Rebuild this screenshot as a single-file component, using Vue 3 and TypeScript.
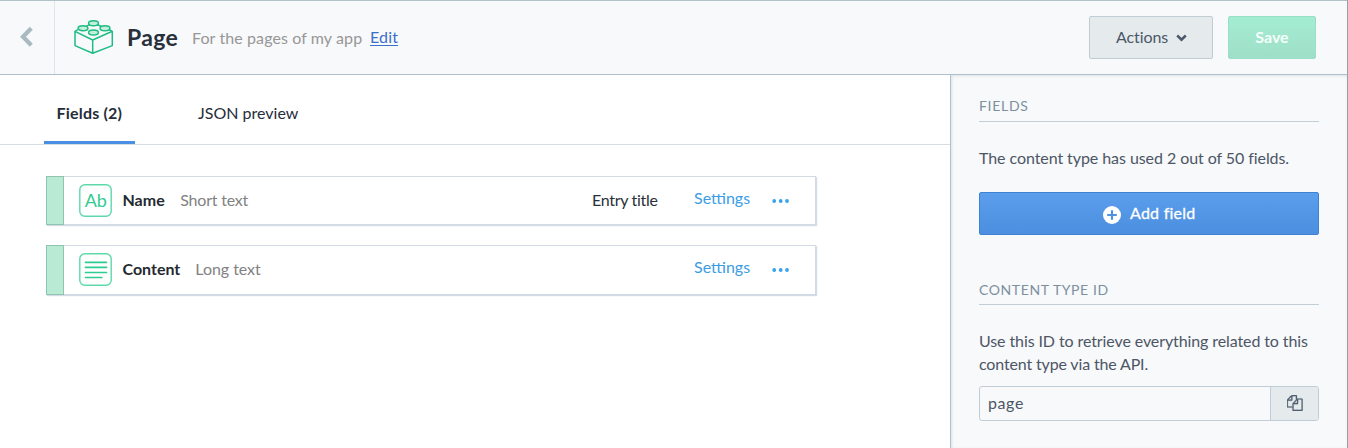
<script setup lang="ts">
interface Field {
  name: string
  type: string
  kind: 'short' | 'long'
  title: boolean
}

const fields: Field[] = [
  { name: 'Name', type: 'Short text', kind: 'short', title: true },
  { name: 'Content', type: 'Long text', kind: 'long', title: false },
]
</script>

<template>
  <div class="page">
    <header class="header">
      <a class="back" aria-label="Back">
        <svg width="14" height="22" viewBox="0 0 14 22"><path d="M12.300 2.200 4 10.800l8.300 8.400" fill="none" stroke="#a9b9c0" stroke-width="4.200" /></svg>
      </a>
      <svg class="brick" width="42" height="38" viewBox="0 0 42 38" fill="none" stroke="#1fbd84" stroke-width="1.500" stroke-linejoin="round">
        <path d="M5 11.700 2 13.300V27.600l17.700 7.700 19.600-7.700V13.300l-3-1.600M2 13.300l17.700 8.700 19.600-8.700M19.700 22v13.300M13.500 8.200l3-1.500M24.500 6.700l4 1.800" />
        <g fill="#c3efdb">
          <ellipse cx="20.500" cy="5.200" rx="4.900" ry="2.500" />
          <ellipse cx="10" cy="10.200" rx="4.900" ry="2.500" />
          <ellipse cx="32" cy="10.200" rx="4.900" ry="2.500" />
          <ellipse cx="20.500" cy="14.400" rx="4.900" ry="2.500" />
        </g>
      </svg>
      <h1>Page</h1>
      <span class="desc">For the pages of my app</span>
      <a class="edit">Edit</a>
      <div class="buttons">
        <button class="btn actions">
          <span>Actions</span>
          <svg width="11" height="8" viewBox="0 0 11 8"><path d="M1.200 1.500 5.500 5.700l4.300-4.200" fill="none" stroke="#4b5a6b" stroke-width="2.500" /></svg>
        </button>
        <button class="btn save"><span>Save</span></button>
      </div>
    </header>

    <div class="body">
      <main class="main">
        <nav class="tabs">
          <a class="tab active"><span>Fields (2)</span></a>
          <a class="tab json">JSON preview</a>
        </nav>
        <ul class="fields">
          <li v-for="f in fields" :key="f.name" class="field" :class="f.kind">
            <span class="handle"></span>
            <svg class="icon" width="33" height="33" viewBox="0 0 33 33">
              <rect x="0.800" y="0.800" width="31.400" height="31.400" rx="5" fill="none" stroke="#5ed9ab" stroke-width="1.400" />
              <text v-if="f.kind === 'short'" x="5.800" y="23" textLength="22" class="ab">Ab</text>
              <path v-else d="M6.500 9.300h21M6.500 14.400h21M6.500 19.500h21M6.500 24.500h16.300" stroke="#2fcb93" stroke-width="1.700" stroke-linecap="round" />
            </svg>
            <strong class="name">{{ f.name }}</strong>
            <span class="type">{{ f.type }}</span>
            <span class="spacer"></span>
            <span v-if="f.title" class="entry">Entry title</span>
            <a class="settings">Settings</a>
            <svg class="dots" width="18" height="4" viewBox="0 0 18 4" fill="#36a3ea">
              <circle cx="2.200" cy="2" r="1.900" /><circle cx="8.700" cy="2" r="1.900" /><circle cx="15" cy="2" r="1.900" />
            </svg>
          </li>
        </ul>
      </main>

      <aside class="side">
        <h2 class="h-fields">FIELDS</h2>
        <p class="usage">The content type has used 2 out of 50 fields.</p>
        <button class="add">
          <svg width="18" height="18" viewBox="0 0 18 18"><circle cx="9" cy="9" r="9" fill="#fff" /><path d="M9 4.200v9.600M4.200 9h9.600" stroke="#4f90e0" stroke-width="2.200" /></svg>
          <span>Add field</span>
        </button>
        <h2 class="h-id">CONTENT TYPE ID</h2>
        <p class="help"><span class="l1">Use this ID to retrieve everything related to this</span><br /><span class="l2">content type via the API.</span></p>
        <div class="copy">
          <span class="value">page</span>
          <button class="copy-btn" aria-label="Copy">
            <svg width="16" height="16" viewBox="0 0 1792 1792" fill="#536171" stroke="#536171" stroke-width="25"><path d="M1664 384q40 0 68 28t28 68v1216q0 40-28 68t-68 28h-960q-40 0-68-28t-28-68v-288h-544q-40 0-68-28t-28-68v-672q0-40 20-88t48-76l408-408q28-28 76-48t88-20h416q40 0 68 28t28 68v328q68-40 128-40h416zm-544 213l-299 299h299v-299zm-640-384l-299 299h299v-299zm196 647l316-316v-416h-384v416q0 40-28 68t-68 28h-416v640h512v-256q0-40 20-88t48-76zm956 804v-1152h-384v416q0 40-28 68t-68 28h-416v640h896z" /></svg>
          </button>
        </div>
      </aside>
    </div>
  </div>
</template>

<style>
body { margin: 0; background: #fff; overflow: hidden; }
</style>

<style scoped>
* { box-sizing: border-box; }
.page {
  width: 1348px;
  height: 448px;
  display: flex;
  flex-direction: column;
  border-right: 1px solid #999fa3;
  background: #fff;
  font: 16px/22px Lato, "Liberation Sans", sans-serif;
  color: #2a3039;
  white-space: nowrap;
}
button { font: inherit; padding: 0; }
.header {
  height: 75px;
  flex: none;
  display: flex;
  background: #f7f9fb;
  border-top: 1px solid #b3c1cb;
  border-bottom: 1px solid #b0bfc9;
}
.back { width: 55px; padding: 25px 0 0 19px; border-right: 1px solid #e0e5e9; }
.brick { margin: 17px 0 0 18px; width: 42px; height: 38px; }
h1 { width: 52px; margin: 21px 0 0 12px; font-size: 23px; line-height: 30px; font-weight: 700; color: #28303b; letter-spacing: 0.3px; }
.desc { width: 170px; margin: 26px 0 0 13px; color: #979797; letter-spacing: 0.1px; }
.edit { margin: 25px 0 0 8px; color: #3c6fc9; text-decoration: underline; text-underline-offset: 2px; letter-spacing: 0.15px; }
.buttons { margin: 15px 31px 0 auto; display: flex; gap: 15px; }
.btn { height: 43px; border-radius: 2px; }
.actions {
  width: 124px;
  display: flex;
  align-items: center;
  gap: 8px;
  padding-left: 26px;
  border: 1px solid #c1cdd4;
  background: #e5ebed;
  color: #4b5766;
}
.actions span { margin-top: -2px; letter-spacing: -0.1px; }
.save { width: 88px; padding-bottom: 2px; border: 1px solid #9adfc7; background: linear-gradient(#a3edd2, #9fdec8); color: #f5fffb; font-weight: 700; }
.body { flex: 1; display: flex; min-height: 0; }
.main { width: 950px; }
.tabs { height: 70px; display: flex; padding-left: 44px; border-bottom: 1px solid #d5dde3; }
.tab { padding-top: 27px; color: #252d3a; }
.active { width: 91px; padding-left: 12.5px; border-bottom: 3px solid #4a90e2; font-weight: 700; letter-spacing: 0.2px; }
.json { margin-left: 63px; }
.fields { list-style: none; margin: 31px 0 0 46px; padding: 0; width: 770px; }
.field {
  height: 49px;
  display: flex;
  margin-bottom: 20px;
  border: 1px solid #d3dae3;
  box-shadow: 1px 1px 1px #d3dbe6;
  background: #fff;
}
.field.long { height: 50px; }
.handle { width: 18px; margin: -1px 0 -1px -1px; background: #b9ead4; border: 1px solid #8fc5ae; }
.icon { margin: 7px 0 0 15px; }
.ab { font-size: 18px; fill: #2fcb93; }
.name { margin: 12px 0 0 10.500px; color: #242a30; }
.type { margin: 12px 0 0 15.500px; color: #828282; letter-spacing: -0.2px; }
.long .type { margin-left: 15px; letter-spacing: -0.05px; }
.spacer { flex: 1; }
.entry { width: 67px; margin: 12px 35px 0 0; letter-spacing: -0.3px; }
.settings { width: 57px; margin: 10px 21px 0 0; color: #3c9de5; }
.dots { margin: 22px 25px 0 0; }
.side {
  flex: 1;
  padding: 19px 28px 0;
  background: #f7f9fb;
  border-left: 1px solid #b0bfc9;
  box-shadow: inset 1px 1px 3px rgba(60, 80, 90, 0.13);
}
h2 { margin: 0; height: 28px; border-bottom: 1px solid #c3cfd6; font-size: 14px; line-height: 24px; font-weight: 400; color: #7c909f; letter-spacing: 0.7px; }
.usage { margin: 25px 0 23px; color: #4d5665; letter-spacing: -0.07px; }
.add {
  width: 340px;
  height: 43px;
  display: flex;
  align-items: center;
  padding-left: 123px;
  border: 1px solid #3e83d3;
  border-radius: 2px;
  background: linear-gradient(#5b9eec, #4c8edf);
  color: #fff;
}
.add svg { margin: 3px 9px 0 0; }
.add span { margin-top: -2px; letter-spacing: 0.25px; -webkit-text-stroke: 0.3px #fff; }
.h-id { margin-top: 42px; line-height: 26px; letter-spacing: 0.6px; }
.help { margin: 24px 0 11px; line-height: 23px; color: #4d5665; letter-spacing: -0.1px; }
.l2 { letter-spacing: -0.15px; }
.copy { height: 35px; display: flex; border: 1px solid #c1cdd6; border-radius: 3px; overflow: hidden; }
.value { flex: 1; padding: 5px 0 0 8px; color: #4d5665; letter-spacing: 0.6px; }
.copy-btn { width: 48px; display: flex; justify-content: center; padding-top: 8px; border: 0; border-left: 1px solid #c1cdd6; background: #e5eaed; }
</style>
